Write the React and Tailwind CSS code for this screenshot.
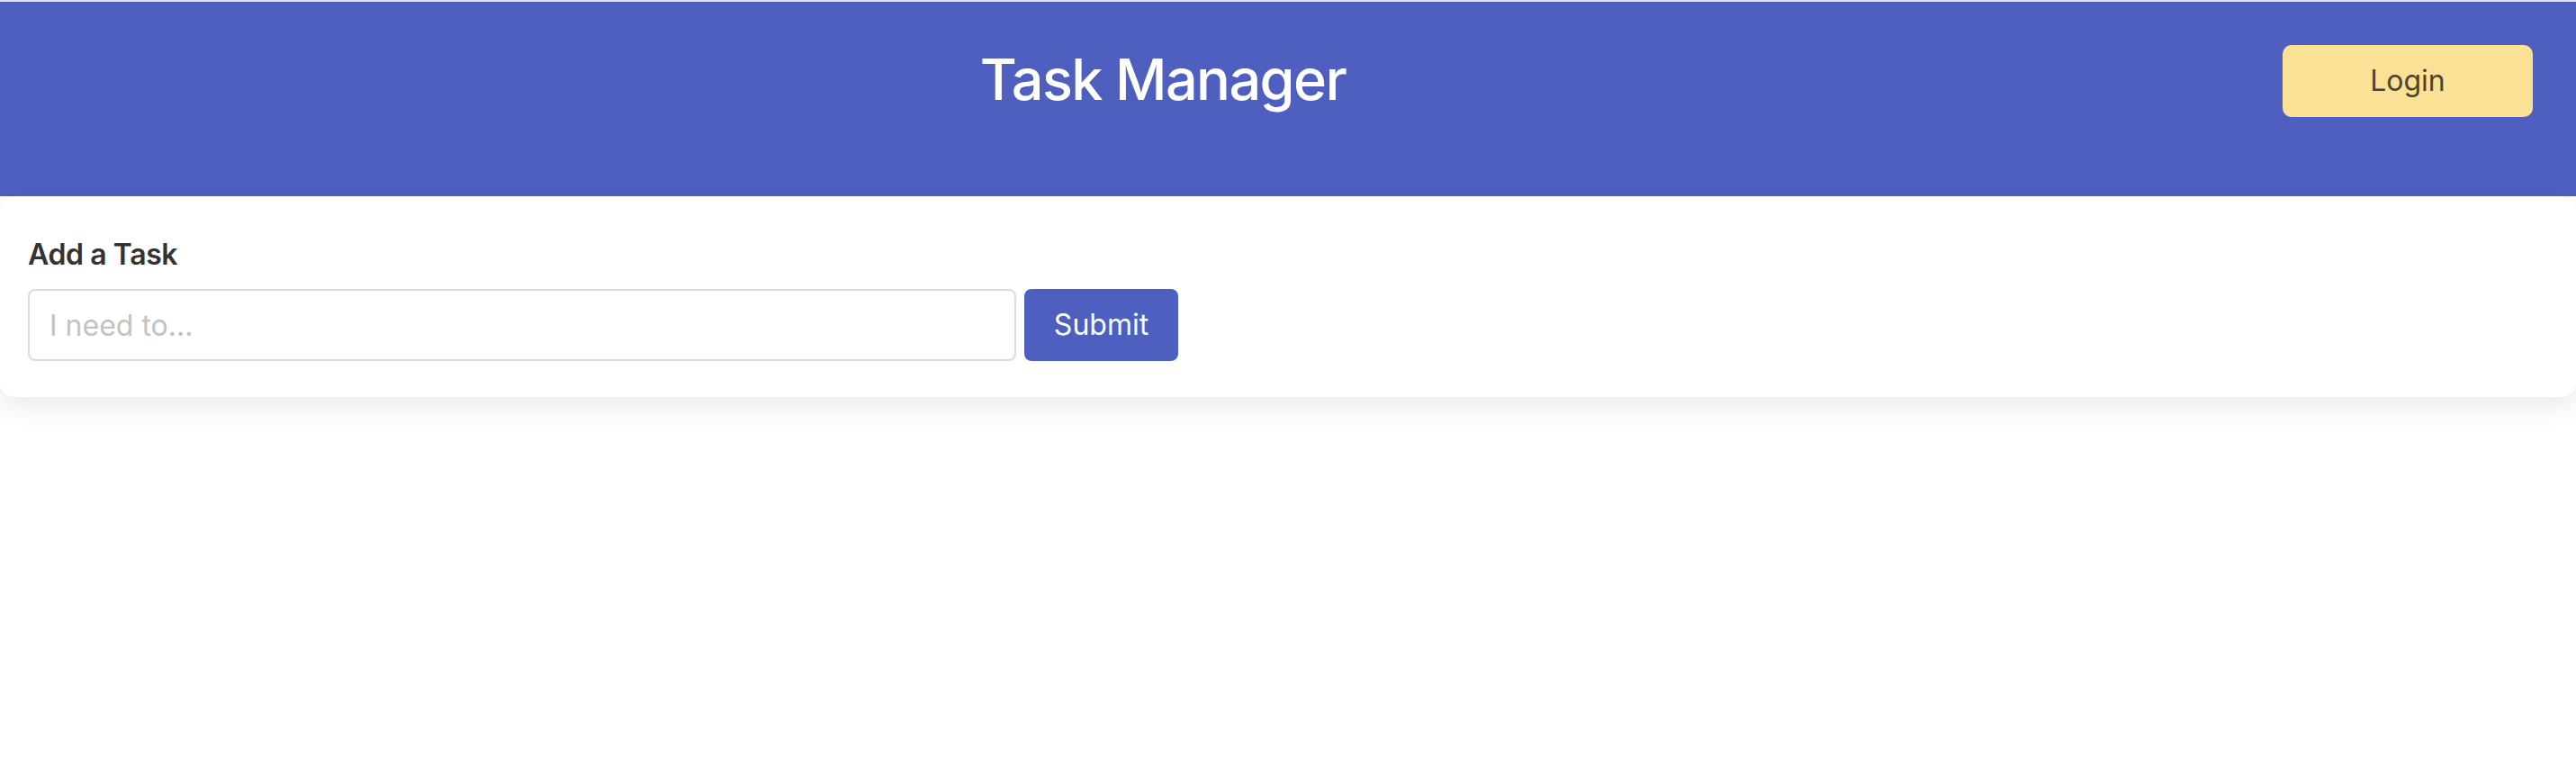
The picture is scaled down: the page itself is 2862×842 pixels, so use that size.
import React, { useState } from "react";

const font = { fontFamily: "Inter, 'Noto Sans', sans-serif" };

const Header = () => (
  <div className="flex justify-between items-start h-[216px] pt-[48px] px-[48px] bg-[#4e5fc0]">
    <div />
    <h1 className="text-[63px] leading-[77px] font-medium text-white tracking-[-1.6px]">
      Task Manager
    </h1>
    <button className="w-[278px] h-[80px] rounded-[10px] bg-[#fae195] text-[#4a4431] text-[32px]">
      Login
    </button>
  </div>
);

const AddTask = () => {
  const [task, setTask] = useState("");

  return (
    <div className="bg-white rounded-[16px] shadow-[0_10px_30px_rgba(0,0,0,0.09)] pt-[45px] pb-[40px] px-[31px]">
      <h2 className="text-[32px] leading-[39px] font-semibold text-[#333333] tracking-[-0.4px]">
        Add a Task
      </h2>
      <div className="flex gap-[9px] mt-[19px]">
        <input
          type="text"
          value={task}
          onChange={(e) => setTask(e.target.value)}
          placeholder="I need to..."
          className="w-[1098px] h-[80px] border-2 border-[#dcdcdc] rounded-[8px] pl-[22px] text-[32px] text-[#333333] placeholder-[#c2c2c2] outline-none"
        />
        <button className="w-[171px] h-[80px] rounded-[8px] bg-[#4e5fc0] text-white text-[32px]">
          Submit
        </button>
      </div>
    </div>
  );
};

export default function App() {
  return (
    <div className="min-h-screen bg-white" style={font}>
      <div className="h-[2px] bg-[#e4e4e4]" />
      <Header />
      <AddTask />
    </div>
  );
}
